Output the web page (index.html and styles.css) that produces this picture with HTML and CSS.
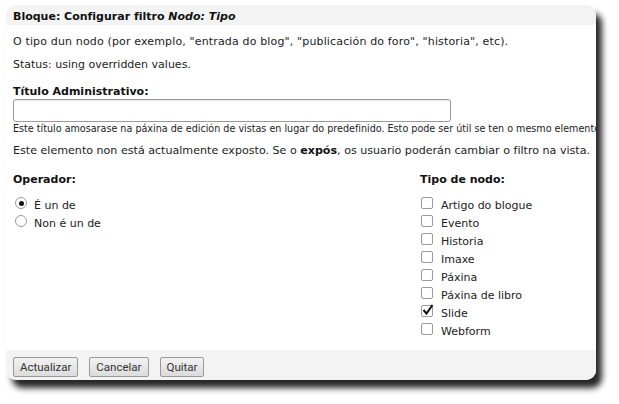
FILE: index.html
```html
<!DOCTYPE html>
<html lang="gl">
<head>
<meta charset="utf-8">
<title>Configurar filtro</title>
<link rel="stylesheet" href="styles.css">
</head>
<body>
<div class="window">
  <div class="titlebar">Bloque: Configurar filtro <em>Nodo: Tipo</em></div>
  <div class="content">
    <p class="line first">O tipo dun nodo (por exemplo, "entrada do blog", "publicación do foro", "historia", etc).</p>
    <p class="line status">Status: using overridden values.</p>
    <label class="heading admin">Título Administrativo:</label>
    <input class="text-input" type="text">
    <p class="hint">Este título amosarase na páxina de edición de vistas en lugar do predefinido. Esto pode ser útil se ten o mesmo elemento dúas veces.</p>
    <p class="exposed">Este elemento non está actualmente exposto. Se o <strong>expós</strong>, os usuario poderán cambiar o filtro na vista.</p>
    <div class="columns">
      <div class="col operator">
        <div class="heading">Operador:</div>
        <ul class="options">
          <li><span class="radio checked"></span>É un de</li>
          <li><span class="radio"></span>Non é un de</li>
        </ul>
      </div>
      <div class="col types">
        <div class="heading">Tipo de nodo:</div>
        <ul class="options checks">
          <li><span class="check"></span>Artigo do blogue</li>
          <li><span class="check"></span>Evento</li>
          <li><span class="check"></span>Historia</li>
          <li><span class="check"></span>Imaxe</li>
          <li><span class="check"></span>Páxina</li>
          <li><span class="check"></span>Páxina de libro</li>
          <li><span class="check checked"><svg viewBox="0 0 14 14" width="14" height="14"><path d="M2.5 7 L5.5 10.5 L11.5 2" fill="none" stroke="#111" stroke-width="2"/></svg></span>Slide</li>
          <li><span class="check"></span>Webform</li>
        </ul>
      </div>
    </div>
  </div>
  <div class="buttonbar">
    <button class="btn">Actualizar</button>
    <button class="btn">Cancelar</button>
    <button class="btn">Quitar</button>
  </div>
</div>
</body>
</html>
```

FILE: styles.css
```css
html, body {
  margin: 0;
  padding: 0;
  background: #fff;
}
body {
  font-family: "DejaVu Sans", Verdana, sans-serif;
  color: #222;
  width: 619px;
  height: 404px;
  overflow: hidden;
}
.window {
  margin: 5px 0 0 6px;
  width: 590px;
  height: 375px;
  border-radius: 10px;
  background: #fff;
  box-shadow: 6px 8px 6px rgba(0, 0, 0, 0.85);
  overflow: hidden;
  display: flex;
  flex-direction: column;
}
.titlebar {
  box-sizing: border-box;
  height: 20px;
  padding: 1px 0 0 7px;
  line-height: 22px;
  background: #f3f3f3;
  font-size: 11px;
  font-weight: bold;
  color: #111;
}
.titlebar em {
  font-style: italic;
}
.content {
  flex: 1;
  padding: 0 0 0 7px;
  overflow: hidden;
}
.line {
  margin: 0;
  font-size: 11px;
  line-height: 14px;
}
.first {
  margin-top: 10px;
  letter-spacing: 0.15px;
}
.status {
  margin-top: 9px;
}
.heading {
  display: block;
  font-size: 11px;
  font-weight: bold;
  line-height: 14px;
  color: #111;
}
.admin {
  margin-top: 14px;
  line-height: 12px;
}
.text-input {
  display: block;
  box-sizing: border-box;
  width: 438px;
  height: 23px;
  margin: 1px 0 0;
  border: 1px solid #9a9a9a;
  border-radius: 3px;
  background: #fff;
  box-shadow: inset 0 1px 1px rgba(0,0,0,0.08);
}
.hint {
  margin: 1px 0 0;
  font-size: 9.6px;
  line-height: 12px;
  white-space: nowrap;
}
.exposed {
  margin: 9px 0 0;
  font-size: 11.1px;
  line-height: 14px;
  white-space: nowrap;
}
.exposed strong {
  color: #111;
}
.columns {
  display: flex;
  margin-top: 15px;
}
.operator {
  width: 407px;
}
.options {
  list-style: none;
  margin: 10px 0 0;
  padding: 0;
}
.options li {
  display: flex;
  align-items: flex-start;
  height: 18px;
  line-height: 18px;
  font-size: 11px;
}
.radio {
  box-sizing: border-box;
  width: 12px;
  height: 12px;
  border: 1px solid #9a9a9a;
  border-radius: 50%;
  margin: 0 7px 0 2px;
  background: #fff;
  position: relative;
}
.radio.checked::after {
  content: "";
  position: absolute;
  left: 2.5px;
  top: 2.5px;
  width: 5px;
  height: 5px;
  border-radius: 50%;
  background: #111;
}
.check {
  box-sizing: border-box;
  width: 12px;
  height: 12px;
  border: 1px solid #9a9a9a;
  border-radius: 2px;
  margin: 0 8px 0 1px;
  background: #fff;
  position: relative;
}
.check svg {
  position: absolute;
  left: -1px;
  top: -3px;
}
.buttonbar {
  box-sizing: border-box;
  height: 30px;
  background: #f3f3f3;
  display: flex;
  align-items: flex-start;
  gap: 11px;
  padding: 7px 7px 0;
}
.btn {
  height: 20px;
  padding: 0 6px;
  font-family: Roboto, "Open Sans", sans-serif;
  font-size: 11.5px;
  color: #333;
  border: 1px solid #999;
  border-radius: 2px;
  background: linear-gradient(#f2f2f2, #dcdcdc);
}
```
